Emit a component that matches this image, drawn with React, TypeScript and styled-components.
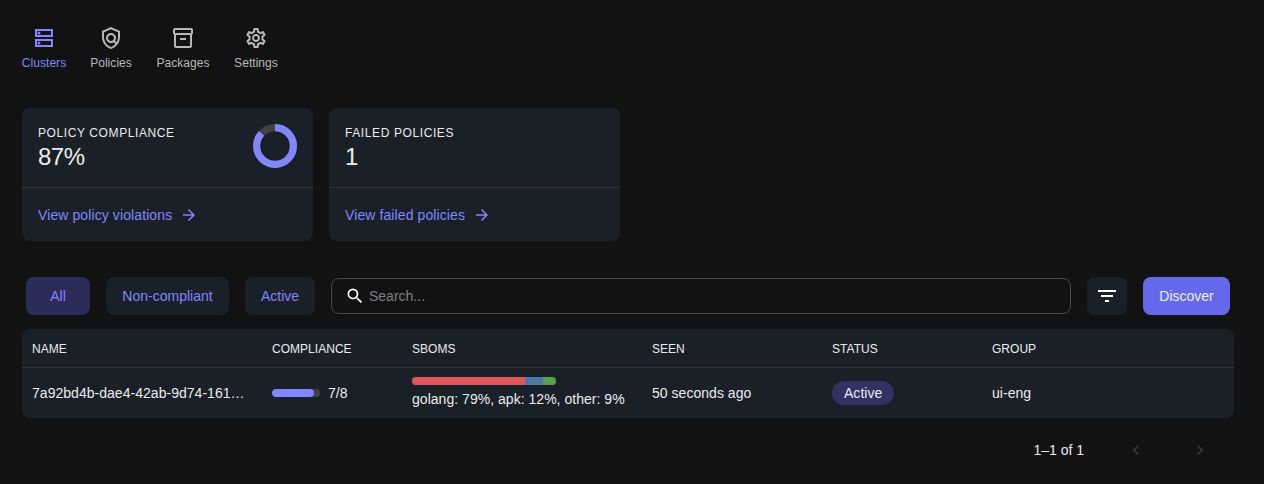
import React from "react";
import styled, { createGlobalStyle } from "styled-components";
import {
  MdArrowForward,
  MdFilterList,
  MdKeyboardArrowLeft,
  MdKeyboardArrowRight,
  MdOutlineInventory2,
  MdOutlinePolicy,
  MdOutlineSettings,
  MdSearch,
} from "react-icons/md";

const primary = "#8087ff";
const paper = "#1a2027";
const divider = "#2f3133";
const textColor = "#ececec";

const GlobalStyle = createGlobalStyle`
  * { box-sizing: border-box; }
  body {
    margin: 0;
    background: #121212;
    color: ${textColor};
    font-family: "Liberation Sans", Arial, sans-serif;
    font-size: 14px;
    line-height: 20px;
  }
  button, input { font: inherit; }
`;

const Page = styled.div`
  height: 484px;
  padding: 26px 30px 0 22px;
  overflow: hidden;
`;

const Nav = styled.nav`
  display: flex;
  gap: 24px;
  height: 46px;
`;

const NavItem = styled.a<{ $active?: boolean; $width: number }>`
  display: flex;
  flex-direction: column;
  align-items: center;
  width: ${(p) => p.$width}px;
  white-space: nowrap;
  font-size: 12px;
  line-height: 16px;
  letter-spacing: 0.05px;
  color: ${(p) => (p.$active ? primary : "#b8b8b8")};
  svg { margin-bottom: 5px; flex: none; }
`;

const Cards = styled.section`
  display: flex;
  gap: 16px;
  margin-top: 36px;
`;

const Card = styled.article`
  width: 291px;
  height: 133px;
  border-radius: 8px;
  background: ${paper};
`;

const CardHead = styled.div`
  display: flex;
  justify-content: space-between;
  height: 80px;
  padding: 16px;
  border-bottom: 1px solid ${divider};
`;

const CardLabel = styled.div`
  font-size: 12px;
  line-height: 18px;
  letter-spacing: 0.6px;
`;

const CardValue = styled.div`
  font-size: 24px;
  line-height: 30px;
  letter-spacing: -0.5px;
`;

const CardLink = styled.a`
  display: flex;
  align-items: center;
  gap: 8px;
  height: 53px;
  padding: 0 16px;
  letter-spacing: 0.1px;
  color: ${primary};
`;

const Toolbar = styled.section`
  display: flex;
  align-items: center;
  gap: 16px;
  margin-top: 36px;
  padding: 0 4px;
`;

const Button = styled.button<{ $bg?: string; $fg?: string; $width: number }>`
  display: flex;
  align-items: center;
  justify-content: center;
  flex: none;
  width: ${(p) => p.$width}px;
  height: 38px;
  padding: 0;
  border: 0;
  border-radius: 8px;
  background: ${(p) => p.$bg ?? paper};
  color: ${(p) => p.$fg ?? primary};
`;

const SearchBox = styled.label`
  display: flex;
  align-items: center;
  gap: 4px;
  flex: 1;
  height: 36px;
  padding: 0 13px;
  border: 1px solid #4a4a4a;
  border-radius: 8px;
  svg { flex: none; color: #fff; }
`;

const SearchInput = styled.input`
  flex: 1;
  padding: 0;
  border: 0;
  outline: 0;
  background: transparent;
  color: ${textColor};
  &::placeholder { color: #808080; opacity: 1; }
`;

const Table = styled.div`
  margin-top: 14px;
  border-radius: 8px;
  background: ${paper};
  letter-spacing: 0.03px;
`;

const Row = styled.div<{ $head?: boolean }>`
  display: grid;
  grid-template-columns: 240px 140px 240px 180px 160px 1fr;
  align-items: center;
  height: ${(p) => (p.$head ? 39 : 50)}px;
  ${(p) => p.$head && `border-bottom: 1px solid ${divider}; font-size: 12px; padding-top: 1px;`}
`;

const Cell = styled.div`
  padding: 0 10px;
  white-space: nowrap;
`;

const Compliance = styled.div`
  display: flex;
  align-items: center;
  gap: 8px;
`;

const Bar = styled.div<{ $width: number }>`
  display: flex;
  width: ${(p) => p.$width}px;
  height: 8px;
  border-radius: 4px;
  overflow: hidden;
  background: #424242;
`;

const Fill = styled.div`
  background: ${primary};
  border-radius: 4px;
`;

const Segment = styled.div<{ $share: number; $color: string }>`
  flex: ${(p) => p.$share} 0 0;
  background: ${(p) => p.$color};
`;

const SbomText = styled.div`
  margin-top: 4px;
`;

const Chip = styled.span`
  display: inline-block;
  height: 24px;
  padding: 0 12px;
  border-radius: 12px;
  line-height: 24px;
  vertical-align: top;
  background: #303264;
`;

const Pager = styled.footer`
  display: flex;
  align-items: center;
  justify-content: flex-end;
  height: 64px;
  padding-right: 24px;
  color: #383838;
`;

const PagerRange = styled.span`
  color: ${textColor};
  margin-right: 42px;
`;

const NextPage = styled.span`
  margin-left: 44px;
  display: flex;
`;

const ServerIcon = () => (
  <svg width="24" height="24" viewBox="0 0 24 24" fill="none">
    <path d="M4 4h16v6H4zM4 14h16v6H4z" stroke="currentColor" strokeWidth="2" />
    <circle cx="7" cy="7" r="1.5" fill="currentColor" />
    <circle cx="7" cy="17" r="1.5" fill="currentColor" />
  </svg>
);

const Donut = ({ value }: { value: number }) => (
  <svg width="44" height="44" viewBox="0 0 44 44" fill="none">
    <circle cx="22" cy="22" r="18.4" stroke="#424242" strokeWidth="7.2" />
    <circle
      cx="22"
      cy="22"
      r="18.4"
      stroke={primary}
      strokeWidth="7.2"
      pathLength={100}
      strokeDasharray={`${value} 100`}
      transform="rotate(-90 22 22)"
    />
  </svg>
);

const columns = ["NAME", "COMPLIANCE", "SBOMS", "SEEN", "STATUS", "GROUP"];

export default function App() {
  return (
    <Page>
      <GlobalStyle />
      <Nav>
        <NavItem $active $width={44}><ServerIcon />Clusters</NavItem>
        <NavItem $width={42}><MdOutlinePolicy size={24} />Policies</NavItem>
        <NavItem $width={54}><MdOutlineInventory2 size={24} />Packages</NavItem>
        <NavItem $width={44}><MdOutlineSettings size={24} />Settings</NavItem>
      </Nav>

      <Cards>
        <Card>
          <CardHead>
            <div>
              <CardLabel>POLICY COMPLIANCE</CardLabel>
              <CardValue>87%</CardValue>
            </div>
            <Donut value={87} />
          </CardHead>
          <CardLink>View policy violations<MdArrowForward size={18} /></CardLink>
        </Card>
        <Card>
          <CardHead>
            <div>
              <CardLabel>FAILED POLICIES</CardLabel>
              <CardValue>1</CardValue>
            </div>
          </CardHead>
          <CardLink>View failed policies<MdArrowForward size={18} /></CardLink>
        </Card>
      </Cards>

      <Toolbar>
        <Button $width={64} $bg="#2c2c5b">All</Button>
        <Button $width={123}>Non-compliant</Button>
        <Button $width={70}>Active</Button>
        <SearchBox>
          <MdSearch size={20} />
          <SearchInput placeholder="Search..." />
        </SearchBox>
        <Button $width={40} $fg="#fff"><MdFilterList size={24} /></Button>
        <Button $width={87} $bg="#6469eb" $fg="#eeeeff">Discover</Button>
      </Toolbar>

      <Table>
        <Row $head>
          {columns.map((name) => <Cell key={name}>{name}</Cell>)}
        </Row>
        <Row>
          <Cell>7a92bd4b-dae4-42ab-9d74-161…</Cell>
          <Cell>
            <Compliance>
              <Bar $width={48}><Fill style={{ width: `${(7 / 8) * 100}%` }} /></Bar>
              7/8
            </Compliance>
          </Cell>
          <Cell>
            <Bar $width={144}>
              <Segment $share={78.5} $color="#e15759" />
              <Segment $share={12.5} $color="#4e79a7" />
              <Segment $share={9} $color="#59a14f" />
            </Bar>
            <SbomText>golang: 79%, apk: 12%, other: 9%</SbomText>
          </Cell>
          <Cell>50 seconds ago</Cell>
          <Cell><Chip>Active</Chip></Cell>
          <Cell>ui-eng</Cell>
        </Row>
      </Table>

      <Pager>
        <PagerRange>1–1 of 1</PagerRange>
        <MdKeyboardArrowLeft size={20} />
        <NextPage><MdKeyboardArrowRight size={20} /></NextPage>
      </Pager>
    </Page>
  );
}
